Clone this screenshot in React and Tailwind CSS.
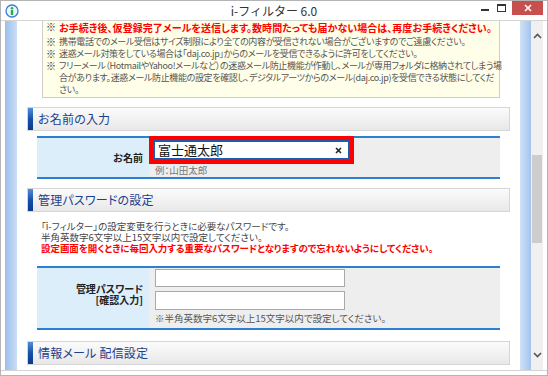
import React from "react";

const FONT = "font-['Noto_Sans_CJK_JP','Noto_Sans',sans-serif]";

function SectionHeader({ title, className = "" }) {
  return (
    <div
      className={`ml-[10px] w-[483px] h-[24px] flex border border-[#d6d6d6] bg-gradient-to-b from-[#fbfbfb] to-[#e8e8e8] ${className}`}
    >
      <div className="w-[5px] bg-gradient-to-b from-[#4f8fdc] via-[#1650a8] to-[#0b3a8c]" />
      <div className="pl-[5px] flex items-center text-[12px] text-[#1b3f8f] tracking-[0.2px] [font-feature-settings:'palt']">
        {title}
      </div>
    </div>
  );
}

function Note({ lines, red }) {
  return (
    <div className={`flex ${red ? "mb-[2px]" : ""}`}>
      <span className="w-[13px] shrink-0 text-[10px] text-[#333] font-bold">※</span>
      <div
        className={
          red
            ? "font-bold text-[#ff0000] text-[10px] leading-[13px] tracking-[0.05px]"
            : "text-[9px] tracking-[-0.35px]"
        }
      >
        {lines.map((l) => (
          <div key={l} className="whitespace-nowrap">
            {l}
          </div>
        ))}
      </div>
    </div>
  );
}

export default function App() {
  return (
    <div
      className={`w-[548px] h-[376px] border border-[#b4b4b4] bg-white flex flex-col overflow-hidden ${FONT}`}
    >
      {/* Title bar */}
      <div className="h-[19px] grid grid-cols-[1fr_auto_1fr] items-center">
        <div className="pl-[4px] flex items-center">
          <svg width="14" height="14" viewBox="0 0 14 14">
            <circle cx="7" cy="7" r="6" fill="#e9f4ff" stroke="#3b7fd0" strokeWidth="1.3" />
            <circle cx="7" cy="4.2" r="1.3" fill="#2fa84a" />
            <rect x="5.8" y="6" width="2.4" height="5" rx="0.6" fill="#2fa84a" />
          </svg>
        </div>
        <div className="text-[12px] text-[#333]">i-フィルター 6.0</div>
        <div className="flex items-start justify-end h-full pr-[4px]">
          <div className="w-[16px] h-[14px] flex items-center justify-center">
            <div className="w-[8px] h-[2px] bg-[#333] mt-[4px]" />
          </div>
          <div className="w-[16px] h-[14px] flex items-center justify-center">
            <div className="w-[9px] h-[8px] border border-[#333] border-t-2" />
          </div>
          <div className="ml-[3px] w-[31px] h-[14px] bg-[#c7504f] flex items-center justify-center">
            <svg width="8" height="8" viewBox="0 0 8 8">
              <path d="M1 1 L7 7 M7 1 L1 7" stroke="#fff" strokeWidth="1.6" />
            </svg>
          </div>
        </div>
      </div>

      {/* Body */}
      <div className="flex h-[350px] px-[4px] border-t border-[#d4d4d4]">
        <div className="w-[12px] bg-gradient-to-r from-[#9dbfeb] to-[#c9def6]" />

        {/* Content */}
        <div className="w-[503px] bg-white overflow-hidden">
          <div className="-mt-[4px] ml-[25px] w-[458px] border border-[#cdcdcd] bg-[#fffee8] pt-[3px] pb-[1px] pl-[3px] leading-[12px] text-[#555] [font-feature-settings:'palt']">
            <Note
              red
              lines={[
                "お手続き後、仮登録完了メールを送信します。数時間たっても届かない場合は、再度お手続きください。",
              ]}
            />
            <Note
              lines={[
                "携帯電話でのメール受信はサイズ制限により全ての内容が受信されない場合がございますのでご遠慮ください。",
              ]}
            />
            <Note
              lines={[
                "迷惑メール対策をしている場合は「daj.co.jp」からのメールを受信できるように許可をしてください。",
              ]}
            />
            <Note
              lines={[
                "フリーメール（HotmailやYahoo!メールなど）の迷惑メール防止機能が作動し、メールが専用フォルダに格納されてしまう場",
                "合があります。迷惑メール防止機能の設定を確認し、デジタルアーツからのメール(daj.co.jp)を受信できる状態にしてくだ",
                "さい。",
              ]}
            />
          </div>

          <SectionHeader title="お名前の入力" className="mt-[9px]" />

          <div className="mt-[5px] ml-[20px] w-[463px] border-t-2 border-b-2 border-[#2d7fd2] flex">
            <div className="w-[112px] bg-[#dbeefa] flex items-center justify-end pr-[6px] text-[10px] font-bold text-[#222]">
              お名前
            </div>
            <div className="flex-1 bg-[#eeeeee] pb-[2px]">
              <div className="relative -mt-[2px] w-[205px] border-[4px] border-[#ff0000]">
                <div className="h-[20px] bg-white border-2 border-[#1c5cae] flex items-center justify-between pl-[3px] pr-[6px]">
                  <span className="text-[13px] leading-[16px] text-[#111]">富士通太郎</span>
                  <svg width="7" height="7" viewBox="0 0 7 7">
                    <path d="M1 1 L6 6 M6 1 L1 6" stroke="#222" strokeWidth="1.6" />
                  </svg>
                </div>
              </div>
              <div className="mt-[1px] pl-[6px] text-[9.5px] leading-[10px] text-[#777] [font-feature-settings:'palt']">
                例：山田太郎
              </div>
            </div>
          </div>

          <SectionHeader title="管理パスワードの設定" className="mt-[9px]" />

          <div className="mt-[9px] ml-[24px] text-[9.5px] leading-[11px] text-[#444] [font-feature-settings:'palt']">
            <div>「i-フィルター」の設定変更を行うときに必要なパスワードです。</div>
            <div>半角英数字6文字以上15文字以内で設定してください。</div>
            <div className="font-bold text-[#ff0000] tracking-[-0.05px]">
              設定画面を開くときに毎回入力する重要なパスワードとなりますので忘れないようにしてください。
            </div>
          </div>

          <div className="mt-[12px] ml-[20px] w-[463px] border-t-2 border-b-2 border-[#2d7fd2] flex">
            <div className="w-[112px] bg-[#dbeefa] flex flex-col items-end justify-center pr-[6px] pb-[8px] text-[10px] leading-[11px] font-bold text-[#222] [font-feature-settings:'palt']">
              <div>管理パスワード</div>
              <div>[確認入力]</div>
            </div>
            <div className="flex-1 bg-[#eeeeee] pl-[6px] pt-[1px] pb-[4px]">
              <div className="w-[190px] h-[18px] bg-white border border-[#a9a9a9]" />
              <div className="mt-[4px] w-[190px] h-[19px] bg-white border border-[#a9a9a9]" />
              <div className="mt-[2px] text-[9.5px] leading-[12px] text-[#555] [font-feature-settings:'palt']">
                ※半角英数字6文字以上15文字以内で設定してください。
              </div>
            </div>
          </div>

          <SectionHeader title="情報メール 配信設定" className="mt-[11px]" />

          <div className="mt-[5px] ml-[40px] text-[9.5px] leading-[12px] text-[#666] whitespace-nowrap">
            情報メールの配信を希望される場合は、以下の項目を選択してください。
          </div>
        </div>

        <div className="w-[11px] bg-gradient-to-r from-[#cfe2f7] to-[#a4c4ed]" />

        {/* Scrollbar */}
        <div className="w-[12px] bg-[#f0f0f0] flex flex-col">
          <div className="h-[30px] flex items-center justify-center">
            <svg width="9" height="6" viewBox="0 0 9 6">
              <path d="M1 5 L4.5 1.5 L8 5" stroke="#555" strokeWidth="1.6" fill="none" />
            </svg>
          </div>
          <div className="flex-1">
            <div className="mt-[104px] mx-[1px] h-[88px] bg-[#cdcdcd]" />
          </div>
          <div className="h-[30px] flex items-center justify-center">
            <svg width="9" height="6" viewBox="0 0 9 6">
              <path d="M1 1 L4.5 4.5 L8 1" stroke="#555" strokeWidth="1.6" fill="none" />
            </svg>
          </div>
        </div>
      </div>

      <div className="h-[5px] border-t border-[#d4d4d4]" />
    </div>
  );
}
